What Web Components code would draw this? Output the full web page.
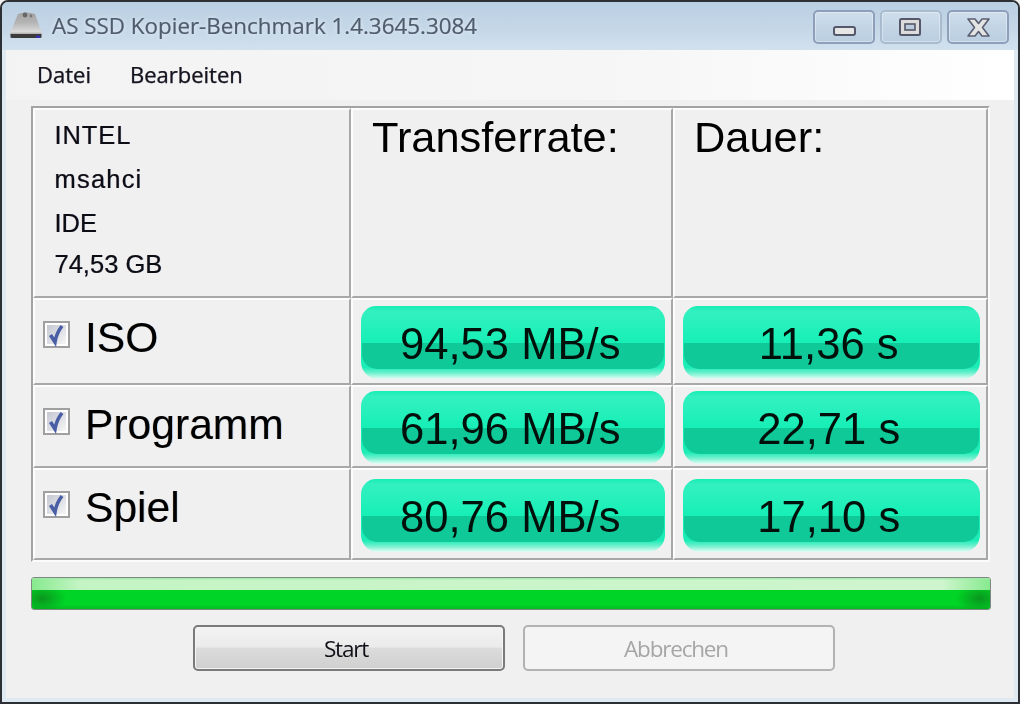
<!DOCTYPE html>
<html lang="de">
<head>
<meta charset="utf-8">
<title>AS SSD Kopier-Benchmark</title>
<style>
    html, body { margin: 0; padding: 0; background: #f0f0f0; overflow: hidden; }
</style>
</head>
<body>
<ssd-window>
    <title-bar slot="title">AS SSD Kopier-Benchmark 1.4.3645.3084</title-bar>
    <menu-bar slot="menu">
        <menu-item>Datei</menu-item>
        <menu-item>Bearbeiten</menu-item>
    </menu-bar>
    <result-table>
        <table-cell>
            <drive-info>
                <span style="letter-spacing: .9px">INTEL</span>
                <span style="letter-spacing: 1.2px">msahci</span>
                <span>IDE</span>
                <span>74,53 GB</span>
            </drive-info>
        </table-cell>
        <table-cell><column-head>Transferrate:</column-head></table-cell>
        <table-cell><column-head>Dauer:</column-head></table-cell>

        <table-cell><row-label>ISO</row-label></table-cell>
        <table-cell center><value-pill>94,53 MB/s</value-pill></table-cell>
        <table-cell center><value-pill>11,36 s</value-pill></table-cell>

        <table-cell><row-label>Programm</row-label></table-cell>
        <table-cell center><value-pill>61,96 MB/s</value-pill></table-cell>
        <table-cell center><value-pill>22,71 s</value-pill></table-cell>

        <table-cell><row-label>Spiel</row-label></table-cell>
        <table-cell center><value-pill>80,76 MB/s</value-pill></table-cell>
        <table-cell center><value-pill>17,10 s</value-pill></table-cell>
    </result-table>
    <progress-strip></progress-strip>
    <button-row>
        <push-button>Start</push-button>
        <push-button disabled>Abbrechen</push-button>
    </button-row>
</ssd-window>

<script>
class SsdWindow extends HTMLElement {
    constructor() {
        super();
        this.attachShadow({ mode: 'open' }).innerHTML = `
            <style>
                :host {
                    display: block;
                    width: 1020px;
                    height: 704px;
                    box-sizing: border-box;
                    background: #dfe9f2;
                    border: 2px solid #2c2f33;
                    border-radius: 8px 8px 0 0;
                    overflow: hidden;
                }
                .frame {
                    height: 100%;
                    display: flex;
                    flex-direction: column;
                    filter: blur(.45px);
                }
                .body {
                    flex: 1;
                    margin: 0 4px 4px 4px;
                    background: #f0f0f0;
                    display: flex;
                    flex-direction: column;
                    padding: 0 0 0 25px;
                }
                .menu { margin: 0 4px; }
            </style>
            <div class="frame">
                <slot name="title"></slot>
                <div class="menu"><slot name="menu"></slot></div>
                <div class="body"><slot></slot></div>
            </div>
        `;
    }
}

class TitleBar extends HTMLElement {
    constructor() {
        super();
        this.attachShadow({ mode: 'open' }).innerHTML = `
            <style>
                :host {
                    display: flex;
                    align-items: center;
                    height: 48px;
                    box-sizing: border-box;
                    padding: 0 9px 0 8px;
                    background: linear-gradient(#b9cfe2, #c6d8e8 60%, #d2e1ee);
                }
                svg { width: 33px; height: 28px; flex: none; margin-top: -3px; }
                .text {
                    flex: 1;
                    margin: -1px 0 0 9px;
                    font: 22.4px "Open Sans", sans-serif;
                    -webkit-text-stroke: .2px #4f5c6e;
                    color: #4f5c6e;
                    text-shadow: 0 0 5px rgba(255,255,255,.7);
                    white-space: nowrap;
                }
                .buttons { display: flex; gap: 5px; margin-top: 2px; }
            </style>
            <svg viewBox="0 0 33 28">
                <defs>
                    <linearGradient id="disk" x1="0" y1="0" x2="0" y2="1">
                        <stop offset="0" stop-color="#a2a2a2"/>
                        <stop offset=".45" stop-color="#b4b4b4"/>
                        <stop offset=".85" stop-color="#dadada"/>
                        <stop offset="1" stop-color="#9a9a9a"/>
                    </linearGradient>
                </defs>
                <path d="M8 3Q16 0 25 3L31 20Q32 23 31.5 24H.5Q0 23 1 20z" fill="url(#disk)"/>
                <circle cx="15" cy="4" r="2.4" fill="#666"/>
                <circle cx="21" cy="5" r="1.4" fill="#777"/>
                <path d="M.5 23h31v3a1 1 0 0 1-1 1h-29a1 1 0 0 1-1-1z" fill="#3b3b3b"/>
                <rect x="26" y="24.5" width="4" height="2.5" fill="#3a2fb0"/>
            </svg>
            <span class="text"><slot></slot></span>
            <div class="buttons">
                <win-button kind="min"></win-button>
                <win-button kind="max"></win-button>
                <win-button kind="close"></win-button>
            </div>
        `;
    }
}

class WinButton extends HTMLElement {
    constructor() {
        super();
        this.attachShadow({ mode: 'open' });
    }

    connectedCallback() {
        const glyphs = {
            min: '<rect x="19" y="15" width="21" height="8" rx="2" fill="#e6e6e6" stroke="#55586a" stroke-width="2"/>',
            max: '<rect x="18" y="7" width="20" height="16" rx="1.5" fill="#dcdcdc" stroke="#55586a" stroke-width="2"/><rect x="23" y="12" width="10" height="6" fill="#b9cbdc" stroke="#55586a" stroke-width="1.6"/>',
            close: '<path d="M19 7h7l3.5 4.5 3.5-4.500h7l-6.5 8.5 6.5 8.5h-7l-3.5-4.5-3.5 4.5h-7l6.5-8.5z" fill="#e4e4e4" stroke="#5a5e70" stroke-width="1.6" stroke-linejoin="round"/>'
        };
        const kind = this.getAttribute('kind');
        const edge = kind === 'max' ? '#a9bccf' : '#8d9fbb';
        this.shadowRoot.innerHTML = `
            <style>
                :host {
                    display: block;
                    width: 62px;
                    height: 34px;
                    box-sizing: border-box;
                    border: 2px solid ${edge};
                    border-radius: 5px;
                    background: linear-gradient(#cfdeeb, #c3d5e5 50%, #bacee0);
                    box-shadow: inset 0 0 0 1px rgba(255,255,255,.35);
                }
                svg { display: block; }
            </style>
            <svg width="58" height="30" viewBox="0 0 58 30">${glyphs[kind]}</svg>
        `;
    }
}

class MenuBar extends HTMLElement {
    constructor() {
        super();
        this.attachShadow({ mode: 'open' }).innerHTML = `
            <style>
                :host {
                    display: flex;
                    gap: 39px;
                    height: 50px;
                    box-sizing: border-box;
                    padding: 0 0 0 31px;
                    align-items: flex-start;
                    background: linear-gradient(90deg, #f3f3f3, #f6f6f6 60%, #ffffff);
                }
            </style>
            <slot></slot>
        `;
    }
}

class MenuItem extends HTMLElement {
    constructor() {
        super();
        this.attachShadow({ mode: 'open' }).innerHTML = `
            <style>
                :host {
                    display: block;
                    padding-top: 7px;
                    font: 22px/34px "Open Sans", sans-serif;
                    -webkit-text-stroke: .25px #16141e;
                    color: #16141e;
                    text-shadow: -.5px 0 rgba(200,60,0,.2), .5px 0 rgba(0,120,255,.2);
                }
            </style>
            <slot></slot>
        `;
    }
}

class ResultTable extends HTMLElement {
    constructor() {
        super();
        this.attachShadow({ mode: 'open' }).innerHTML = `
            <style>
                :host {
                    display: grid;
                    grid-template-columns: 318px 322px 315px;
                    grid-template-rows: 190px 87px 83px 92px;
                    width: 959px;
                    box-sizing: border-box;
                    margin-top: 6px;
                    border: 2px solid #fbfbfb;
                    border-top-color: #a3a3a3;
                    border-left-color: #a3a3a3;
                }
            </style>
            <slot></slot>
        `;
    }
}

class TableCell extends HTMLElement {
    constructor() {
        super();
        this.attachShadow({ mode: 'open' }).innerHTML = `
            <style>
                :host {
                    display: block;
                    box-sizing: border-box;
                    min-width: 0;
                    border: 2.5px solid #a8a8a8;
                    border-top-color: #fdfdfd;
                    border-left-color: #fdfdfd;
                }
                :host([center]) {
                    display: flex;
                    align-items: center;
                    padding: 2px 6px 0 7.5px;
                }
            </style>
            <slot></slot>
        `;
    }
}

class DriveInfo extends HTMLElement {
    constructor() {
        super();
        this.attachShadow({ mode: 'open' }).innerHTML = `
            <style>
                :host {
                    display: grid;
                    grid-template-rows: 44px 45px 42px 41px;
                    align-items: center;
                    padding: 3px 0 0 19.5px;
                    font: 25.5px "Liberation Sans", sans-serif;
                    -webkit-text-stroke: .15px #0c0c14;
                    color: #0c0c14;
                    text-shadow: -.5px 0 rgba(200,60,0,.22), .5px 0 rgba(0,120,255,.22);
                }
            </style>
            <slot></slot>
        `;
    }
}

class ColumnHead extends HTMLElement {
    constructor() {
        super();
        this.attachShadow({ mode: 'open' }).innerHTML = `
            <style>
                :host {
                    display: block;
                    padding: 2px 0 0 19px;
                    font: 43.4px/50px "Liberation Sans", sans-serif;
                    color: #000;
                }
            </style>
            <slot></slot>
        `;
    }
}

class RowLabel extends HTMLElement {
    constructor() {
        super();
        this.attachShadow({ mode: 'open' }).innerHTML = `
            <style>
                :host {
                    display: flex;
                    align-items: flex-start;
                    gap: 15px;
                    padding: 13px 0 0 8px;
                }
                .text {
                    font: 42.6px/48px "Liberation Sans", sans-serif;
                    color: #000;
                    text-shadow: -.6px 0 rgba(230,120,0,.3), .6px 0 rgba(0,120,255,.3);
                }
                svg { flex: none; margin-top: 8px; }
            </style>
            <svg width="27" height="27" viewBox="0 0 27 27">
                <defs>
                    <linearGradient id="tick" x1="0" y1="0" x2="1" y2="1">
                        <stop offset="0" stop-color="#c4c7d2"/>
                        <stop offset="1" stop-color="#f6f6f6"/>
                    </linearGradient>
                </defs>
                <rect x="1" y="1" width="25" height="25" fill="#fff" stroke="#a0a0a0" stroke-width="2"/>
                <rect x="4" y="4" width="19" height="19" fill="url(#tick)"/>
                <path d="M7.5 14l4.5 7C13 15 15 10 19 5" fill="none" stroke="#4a5ea6" stroke-width="3.6"/>
            </svg>
            <span class="text"><slot></slot></span>
        `;
    }
}

class ValuePill extends HTMLElement {
    constructor() {
        super();
        this.attachShadow({ mode: 'open' }).innerHTML = `
            <style>
                :host {
                    display: flex;
                    flex: 1;
                    height: 73px;
                    align-items: center;
                    justify-content: center;
                    box-sizing: border-box;
                    padding: 4px 5px 0 0;
                    position: relative;
                    border-radius: 15px 15px 17px 17px;
                    background: linear-gradient(#15edb3 0, #33f0c0 7%, #28f0bc 25%, #16efb6 50%, #1cecb6 84%, #66f0cc 91%, #e4fcf4 100%);
                    font: 43.6px "Liberation Sans", sans-serif;
                    color: #02100c;
                }
                .band {
                    position: absolute;
                    left: 1.5px;
                    right: 1.5px;
                    top: 37px;
                    bottom: 10px;
                    border-radius: 0 0 15px 15px;
                    background: #10c998;
                }
                .text { position: relative; white-space: nowrap; }
            </style>
            <div class="band"></div>
            <span class="text"><slot></slot></span>
        `;
    }
}

class ProgressStrip extends HTMLElement {
    constructor() {
        super();
        this.attachShadow({ mode: 'open' }).innerHTML = `
            <style>
                :host {
                    display: flex;
                    flex-direction: column;
                    width: 960px;
                    height: 33px;
                    box-sizing: border-box;
                    margin-top: 15px;
                    border: 1.5px solid #7d8a7f;
                    border-radius: 3px;
                    overflow: hidden;
                }
                .gloss {
                    height: 12px;
                    background: linear-gradient(#9fe9a8, transparent 20%),
                        linear-gradient(90deg, #86ea8e, #c4f4c4 5%, #cff5ce 95%, #86ea8e);
                }
                .fill {
                    flex: 1;
                    background: radial-gradient(ellipse 24px 15px at 10px 45%, #0a961e, transparent),
                        radial-gradient(ellipse 24px 15px at calc(100% - 10px) 45%, #0a961e, transparent),
                        linear-gradient(#00d426 80%, #05ba22);
                }
            </style>
            <div class="gloss"></div>
            <div class="fill"></div>
        `;
    }
}

class ButtonRow extends HTMLElement {
    constructor() {
        super();
        this.attachShadow({ mode: 'open' }).innerHTML = `
            <style>
                :host {
                    display: flex;
                    gap: 18px;
                    margin-top: 15px;
                    padding-left: 162px;
                }
            </style>
            <slot></slot>
        `;
    }
}

class PushButton extends HTMLElement {
    constructor() {
        super();
        this.attachShadow({ mode: 'open' }).innerHTML = `
            <style>
                :host {
                    display: flex;
                    align-items: center;
                    justify-content: center;
                    width: 312px;
                    height: 46px;
                    box-sizing: border-box;
                    padding-right: 6px;
                    border: 2px solid #7a7a7a;
                    border-radius: 5px;
                    background: linear-gradient(#f3f3f3, #ebebeb 48%, #dcdcdc 50%, #cfcfcf);
                    box-shadow: inset 0 0 0 1px #f4f4f4;
                    font: 22.5px "Open Sans", sans-serif;
                    letter-spacing: -1.2px;
                    color: #101018;
                }
                :host([disabled]) {
                    border-color: #b2b2b2;
                    background: #f4f4f4;
                    box-shadow: none;
                    color: #a6a6a6;
                }
            </style>
            <slot></slot>
        `;
    }
}

customElements.define('ssd-window', SsdWindow);
customElements.define('title-bar', TitleBar);
customElements.define('win-button', WinButton);
customElements.define('menu-bar', MenuBar);
customElements.define('menu-item', MenuItem);
customElements.define('result-table', ResultTable);
customElements.define('table-cell', TableCell);
customElements.define('drive-info', DriveInfo);
customElements.define('column-head', ColumnHead);
customElements.define('row-label', RowLabel);
customElements.define('value-pill', ValuePill);
customElements.define('progress-strip', ProgressStrip);
customElements.define('button-row', ButtonRow);
customElements.define('push-button', PushButton);
</script>
</body>
</html>
